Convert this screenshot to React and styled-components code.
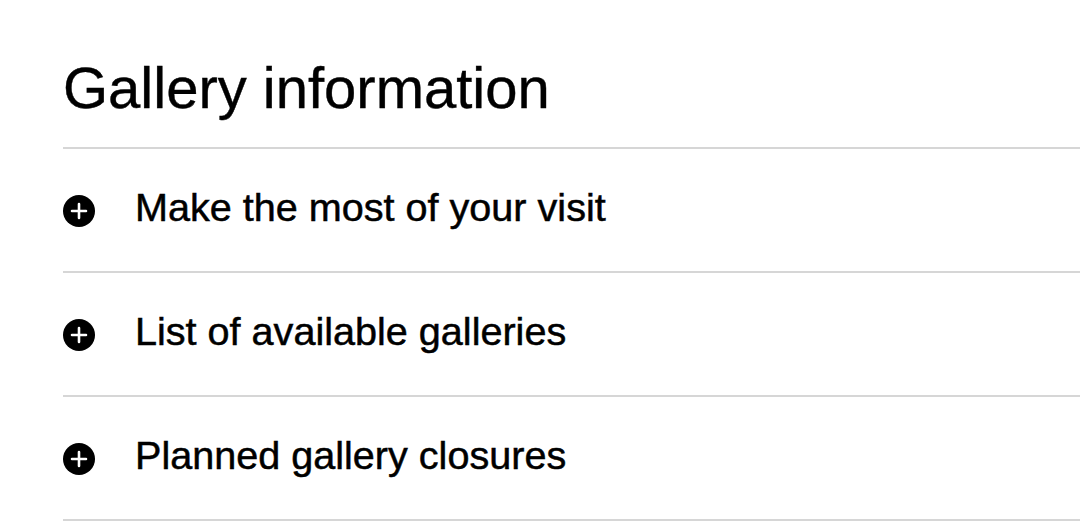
import styled, { createGlobalStyle } from "styled-components";

const GlobalStyle = createGlobalStyle`
  body {
    margin: 0;
    background: #ffffff;
    font-family: "Liberation Sans", Arial, sans-serif;
    color: #000000;
  }
`;

const sections = [
  "Make the most of your visit",
  "List of available galleries",
  "Planned gallery closures",
];

function PlusIcon() {
  return (
    <svg width="32" height="32" viewBox="0 0 32 32" aria-hidden="true">
      <circle cx="16" cy="16" r="16" fill="#000" />
      <path d="M16 9v14M9 16h14" stroke="#fff" strokeWidth="2.6" strokeLinecap="round" />
    </svg>
  );
}

function App() {
  return (
    <>
      <GlobalStyle />
      <Page>
        <Title>Gallery information</Title>
        {sections.map((label) => (
          <Row key={label} type="button">
            <IconWrap>
              <PlusIcon />
            </IconWrap>
            <Label>{label}</Label>
          </Row>
        ))}
      </Page>
    </>
  );
}

export default App;

const Page = styled.div`
  padding-left: 63px;
  display: flex;
  flex-direction: column;
`;

const Title = styled.h2`
  margin: 0;
  padding-top: 56px;
  height: 91px;
  font-size: 58px;
  line-height: 64px;
  font-weight: 400;
  -webkit-text-stroke: 0.4px #000;
  border-bottom: 2px solid #d6d6d6;
`;

const Row = styled.button`
  display: flex;
  align-items: center;
  gap: 40px;
  height: 124px;
  padding: 0;
  margin: 0;
  background: none;
  border: none;
  border-bottom: 2px solid #d6d6d6;
  text-align: left;
  font-family: inherit;
  color: inherit;
  cursor: pointer;
`;

const IconWrap = styled.span`
  display: flex;
  width: 32px;
  height: 32px;
  margin-top: 2px;
`;

const Label = styled.span`
  font-size: 39.6px;
  line-height: 1.2;
  padding-bottom: 4px;
  -webkit-text-stroke: 0.5px #000;
`;
